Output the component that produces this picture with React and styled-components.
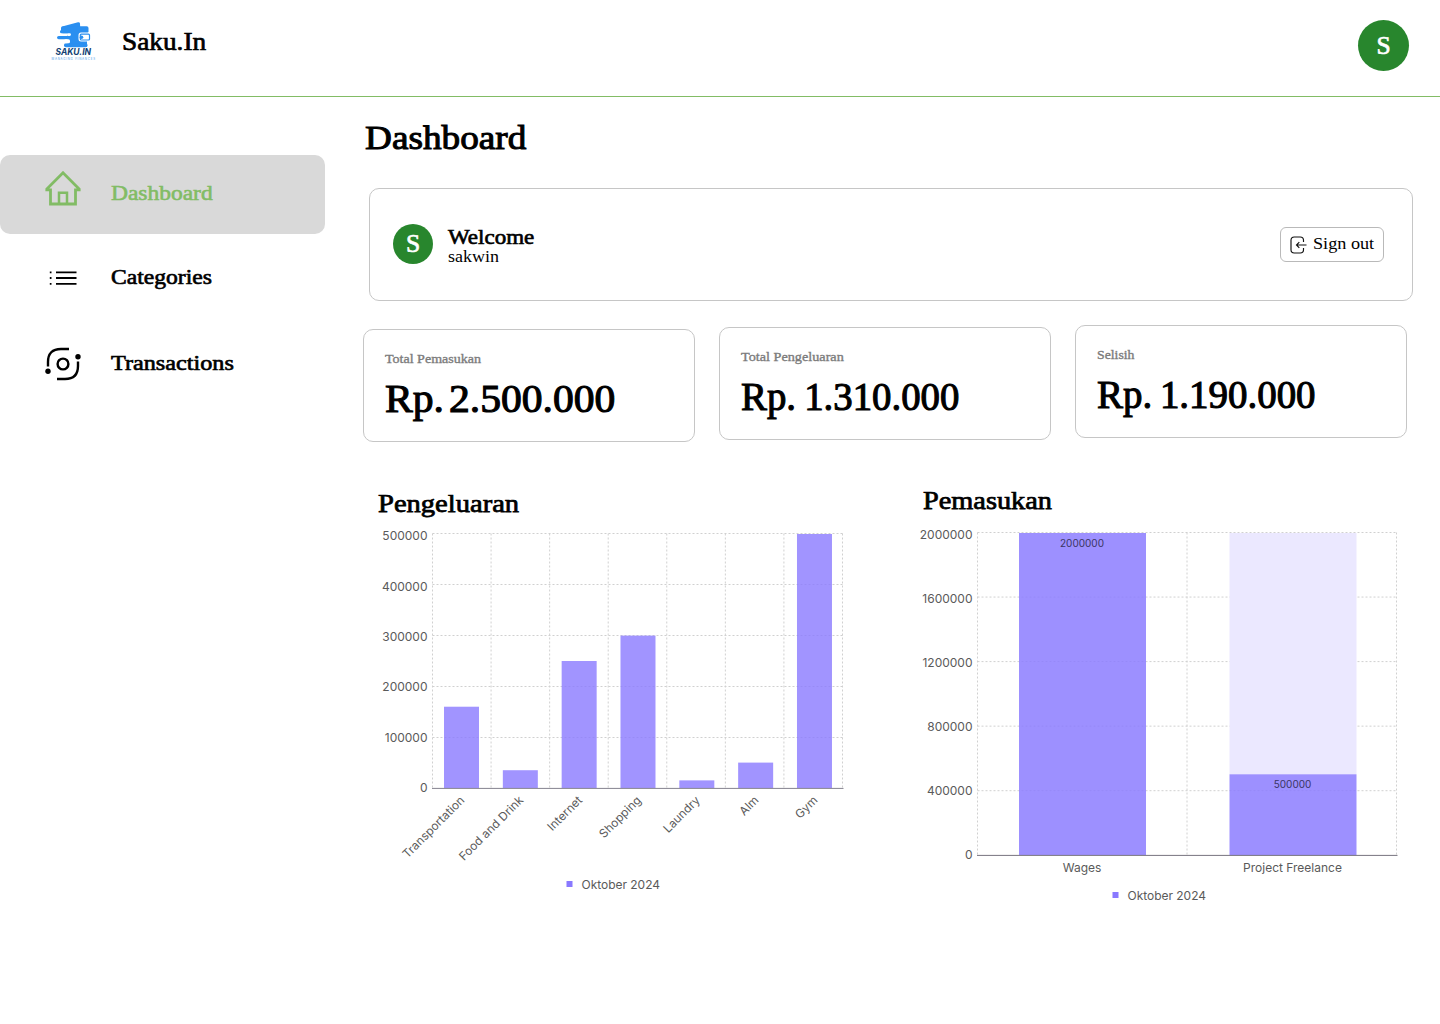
import React from "react";
import styled, { createGlobalStyle } from "styled-components";

const GlobalStyle = createGlobalStyle`
  * { box-sizing: border-box; }
  body { margin: 0; background: #fff; color: #000; font-family: "Liberation Serif", serif; }
  h1, h2, p { margin: 0; font-weight: 400; }
`;

const Page = styled.div`
  min-height: 1024px;
  display: flex;
  flex-direction: column;
`;

const Label = styled.span`
  display: inline-block;
  white-space: nowrap;
  font-size: ${(p) => p.$size}px;
  line-height: ${(p) => p.$line || p.$size}px;
  color: ${(p) => p.$color || "#000"};
  word-spacing: ${(p) => p.$gap || 0}px;
  -webkit-text-stroke: ${(p) => p.$weight || 0}px currentColor;
  transform: scaleX(${(p) => p.$stretch || 1});
  transform-origin: left center;
`;

const Header = styled.header`
  height: 97px;
  border-bottom: 1px solid #82bc65;
  display: flex;
  align-items: flex-start;
  justify-content: space-between;
  padding: 20px 31px 0 50px;
`;

const Brand = styled.div`
  display: flex;
  align-items: center;
  gap: 25px;
  height: 42px;
`;

const BrandName = styled(Label)`
  padding-top: 2px;
`;

const Avatar = styled.div`
  width: ${(p) => p.$size}px;
  height: ${(p) => p.$size}px;
  border-radius: 50%;
  background: #28862d;
  display: flex;
  align-items: center;
  justify-content: center;
  flex: none;
`;

const Initial = styled(Label)`
  transform-origin: center;
`;

const Body = styled.div`
  display: flex;
  flex: 1;
`;

const Sidebar = styled.nav`
  width: 325px;
  flex: none;
  padding-top: 58px;
`;

const NavItem = styled.div`
  display: flex;
  align-items: center;
  gap: 30px;
  height: ${(p) => (p.$active ? 79 : 86)}px;
  padding: 0 0 ${(p) => (p.$active ? 3 : 0)}px 45px;
  border-radius: 10px;
  background: ${(p) => (p.$active ? "#d9d9d9" : "transparent")};
`;

const NavLabel = styled(Label)`
  padding-top: 2px;
`;

const NavIcon = styled.svg`
  width: 36px;
  height: 36px;
  flex: none;
  margin-top: ${(p) => p.$shift || 0}px;
`;

const Main = styled.main`
  flex: 1;
  padding: 20px 27px 0 38px;
`;

const Title = styled.h1`
  height: 42px;
  padding-left: 2px;
  display: flex;
  align-items: center;
`;

const Panel = styled.section`
  border: 1px solid #c6c6c6;
  border-radius: 10px;
  background: #fff;
`;

const Welcome = styled(Panel)`
  margin: 29px 0 0 6px;
  height: 113px;
  display: flex;
  align-items: center;
  padding: 0 28px 1px 23px;
`;

const Greeting = styled.div`
  display: flex;
  flex-direction: column;
  flex: 1;
  padding: 3px 0 0 15px;
`;

const SignOut = styled.button`
  width: 104px;
  height: 35px;
  border: 1px solid #b9b9b9;
  border-radius: 6px;
  background: #fff;
  padding: 0 0 0 9px;
  margin-top: 1px;
  display: flex;
  align-items: center;
  gap: 6px;
  font-family: inherit;
`;

const SignOutLabel = styled(Label)`
  padding-bottom: 3px;
`;

const Stats = styled.div`
  display: flex;
  align-items: flex-start;
  gap: 24px;
  margin-top: 24px;
`;

const Stat = styled(Panel)`
  width: 332px;
  height: 113px;
  margin-top: ${(p) => p.$drop}px;
  padding: 21px;
  display: flex;
  flex-direction: column;
`;

const Charts = styled.div`
  display: flex;
  margin-top: 44px;
`;

const ChartCard = styled.section`
  width: ${(p) => p.$width}px;
`;

const ChartTitle = styled.h2`
  height: 36px;
  padding: 0 0 ${(p) => p.$lift || 0}px ${(p) => p.$inset}px;
  display: flex;
  align-items: center;
`;

const Plot = styled.svg`
  display: block;
  font-family: Inter, sans-serif;
  font-size: 12px;
  fill: #5a5a5a;
`;

function Logo() {
  return (
    <svg width="47" height="42" viewBox="50 20 47 42">
      <g fill="#2b8ff0">
        <path d="M61.300 28.800Q61.300 26.600 64 25.900L78 22.200Q79.800 21.900 80 23.500L80.200 27.500Z" />
        <rect x="61" y="26.300" width="27.500" height="7" rx="1.800" />
        <rect x="67.500" y="27" width="19.500" height="20" rx="1.500" />
        <rect x="60" y="30" width="12" height="3.300" rx="1.600" />
        <rect x="57" y="35.900" width="16" height="3.400" rx="1.700" />
        <rect x="64" y="43.200" width="23.500" height="4" rx="1.800" />
      </g>
      <rect x="67" y="33.300" width="4" height="2.600" rx="1.300" fill="#fff" />
      <rect x="64" y="39.300" width="6" height="3.900" rx="1.500" fill="#fff" />
      <rect x="78.500" y="32.600" width="12" height="9" rx="2.500" fill="#fff" />
      <rect x="80.300" y="34.200" width="9.200" height="5.800" rx="1" fill="#fff" stroke="#2b8ff0" strokeWidth="1.200" />
      <circle cx="81.500" cy="37.200" r="1.800" fill="#2b8ff0" />
      <text x="55.500" y="55" fontFamily="Inter, sans-serif" fontSize="8.600" fontWeight="700" fontStyle="italic" fill="#123f73" textLength="35.500" lengthAdjust="spacingAndGlyphs">SAKU.IN</text>
      <text x="51.500" y="59.600" fontFamily="Inter, sans-serif" fontSize="2.900" fill="#4c9cea" textLength="43.500">MANAGING FINANCES</text>
    </svg>
  );
}

const HomeIcon = () => (
  <NavIcon viewBox="0 0 36 36" $shift={-9} fill="none" stroke="#82bc65" strokeWidth="2.800" strokeLinejoin="round" strokeLinecap="round">
    <path d="M5.500 18.800H1.800V18L18 1.800 34.200 18V18.800H30.500V33H5.500Z" strokeLinejoin="miter" />
    <path d="M14 32.500V21.700H22V32.500" strokeWidth="2.500" strokeLinejoin="miter" />
  </NavIcon>
);

const ListIcon = () => (
  <NavIcon viewBox="0 0 36 36" $shift={4} fill="none" stroke="#000" strokeWidth="1.800">
    <path d="M11 11.400H31.500M11 17H31.500M11 22.800H31.500" />
    <path d="M4.800 11.400H6.500M4.800 17H6.500M4.800 22.800H6.500" />
  </NavIcon>
);

const TransactionsIcon = () => (
  <NavIcon viewBox="0 0 36 36" $shift={1} fill="none" stroke="#000" strokeWidth="2.400">
    <circle cx="18" cy="18" r="5.400" />
    <path d="M24 3H16Q3 3 3 16V20.500M12 33H20Q33 33 33 20V15.500" />
    <circle cx="33" cy="10.700" r="2.700" fill="#000" stroke="none" />
    <circle cx="3" cy="25.300" r="2.700" fill="#000" stroke="none" />
  </NavIcon>
);

const SignOutIcon = () => (
  <svg width="17" height="18" viewBox="0 0 17 18" fill="none" stroke="#111" strokeWidth="1.150">
    <path d="M13.500 6V4.200Q13.500 1 10.300 1H4.200Q1 1 1 4.200V13.800Q1 17 4.200 17H10.300Q13.500 17 13.500 13.800V12" />
    <path d="M16.500 9H6.500M9.300 6.200 6.500 9 9.300 11.800" />
  </svg>
);

const grid = { stroke: "#d0d0d0", strokeWidth: 1, strokeDasharray: "2 2" };

const expenses = [
  ["Transportation", 160000],
  ["Food and Drink", 35000],
  ["Internet", 250000],
  ["Shopping", 300000],
  ["Laundry", 15000],
  ["Alm", 50000],
  ["Gym", 500000],
];

function ExpenseChart() {
  return (
    <Plot width="490" height="372" viewBox="363 522 490 372">
      {[0, 1, 2, 3, 4].map((i) => (
        <line key={i} x1="432.500" x2="843" y1={533.5 + i * 51} y2={533.5 + i * 51} {...grid} />
      ))}
      {[0, 1, 2, 3, 4, 5, 6, 7].map((i) => (
        <line key={i} x1={432.5 + i * 58.57} x2={432.5 + i * 58.57} y1="533.500" y2="788" {...grid} />
      ))}
      {[500000, 400000, 300000, 200000, 100000, 0].map((v, i) => (
        <text key={v} x="427.500" y={540.2 + i * 50.35} textAnchor="end">{v}</text>
      ))}
      {expenses.map(([name, value], i) => {
        const x = 444 + i * 58.83;
        const h = (value / 500000) * 254;
        return (
          <g key={name}>
            <rect x={x} y={788 - h} width="35" height={h} fill="#8979ff" fillOpacity="0.800" />
            <text fontSize="11.850" textAnchor="end" transform={`translate(${x + 21.3} 801) rotate(-45)`}>{name}</text>
          </g>
        );
      })}
      <line x1="432" x2="843.500" y1="788.400" y2="788.400" stroke="#85828f" />
      <rect x="566.500" y="881" width="6" height="6" fill="#8979ff" />
      <text x="581.500" y="888.500" textLength="78.500">Oktober 2024</text>
    </Plot>
  );
}

function IncomeChart() {
  return (
    <Plot width="500" height="385" viewBox="910 522 500 385">
      {[0, 1, 2, 3, 4].map((i) => (
        <line key={i} x1="977.500" x2="1397" y1={532.5 + i * 64.55} y2={532.5 + i * 64.55} {...grid} />
      ))}
      {[977.5, 1187, 1396.5].map((x) => (
        <line key={x} x1={x} x2={x} y1="532.500" y2="855" {...grid} />
      ))}
      {[2000000, 1600000, 1200000, 800000, 400000, 0].map((v, i) => (
        <text key={v} x="972.500" y={539.2 + i * 64} textAnchor="end">{v}</text>
      ))}
      <rect x="1229.500" y="533" width="127" height="241.500" fill="#ebe8ff" />
      <rect x="1019" y="533" width="127" height="322" fill="#8979ff" fillOpacity="0.830" />
      <rect x="1229.500" y="774.300" width="127" height="81" fill="#8979ff" fillOpacity="0.830" />
      <line x1="977" x2="1397.500" y1="855.400" y2="855.400" stroke="#77747f" />
      <g fontSize="10" fill="#3a3564" textAnchor="middle">
        <text x="1082" y="546.700">2000000</text>
        <text x="1292.500" y="788.200">500000</text>
      </g>
      <text x="1082" y="872.200" textAnchor="middle">Wages</text>
      <text x="1292.500" y="872.200" textAnchor="middle">Project Freelance</text>
      <rect x="1112.500" y="892" width="6" height="6" fill="#8979ff" />
      <text x="1127.500" y="899.500" textLength="78.500">Oktober 2024</text>
    </Plot>
  );
}

const stats = [
  { label: "Total Pemasukan", value: "Rp. 2.500.000", drop: 4, ls: 1.105, vs: 1.066, gap: -5 },
  { label: "Total Pengeluaran", value: "Rp. 1.310.000", drop: 2, ls: 1.12, vs: 0.995, gap: -1.5 },
  { label: "Selisih", value: "Rp. 1.190.000", drop: 0, ls: 1.085, vs: 0.998, gap: -2 },
];

export default function App() {
  return (
    <Page>
      <GlobalStyle />
      <Header>
        <Brand>
          <Logo />
          <BrandName $size={25.5} $stretch={1.07} $weight={0.7}>Saku.In</BrandName>
        </Brand>
        <Avatar $size={51}>
          <Initial $size={25.5} $color="#fff" $weight={0.7}>S</Initial>
        </Avatar>
      </Header>
      <Body>
        <Sidebar>
          <NavItem $active>
            <HomeIcon />
            <NavLabel $size={21.2} $stretch={1.107} $weight={0.6} $color="#82bc65">Dashboard</NavLabel>
          </NavItem>
          <NavItem>
            <ListIcon />
            <NavLabel $size={21.2} $stretch={1.113} $weight={0.65}>Categories</NavLabel>
          </NavItem>
          <NavItem>
            <TransactionsIcon />
            <NavLabel $size={21.2} $stretch={1.143} $weight={0.65}>Transactions</NavLabel>
          </NavItem>
        </Sidebar>
        <Main>
          <Title>
            <Label $size={34} $stretch={1.095} $weight={1}>Dashboard</Label>
          </Title>
          <Welcome>
            <Avatar $size={40}>
              <Initial $size={25.5} $color="#fff" $weight={0.7}>S</Initial>
            </Avatar>
            <Greeting>
              <Label $size={21.2} $line={22} $stretch={1.085} $weight={0.65}>Welcome</Label>
              <Label $size={17} $line={18} $stretch={1.06}>sakwin</Label>
            </Greeting>
            <SignOut>
              <SignOutIcon />
              <SignOutLabel $size={17} $stretch={1.07}>Sign out</SignOutLabel>
            </SignOut>
          </Welcome>
          <Stats>
            {stats.map((s) => (
              <Stat key={s.label} $drop={s.drop}>
                <Label $size={12.7} $line={16} $stretch={s.ls} $weight={0.35} $color="#7c7c7c">{s.label}</Label>
                <Label $size={39} $line={64} $stretch={s.vs} $weight={1.1} $gap={s.gap}>{s.value}</Label>
              </Stat>
            ))}
          </Stats>
          <Charts>
            <ChartCard $width={547}>
              <ChartTitle $inset={15}>
                <Label $size={25.5} $stretch={1.12} $weight={0.75}>Pengeluaran</Label>
              </ChartTitle>
              <ExpenseChart />
            </ChartCard>
            <ChartCard $width={500}>
              <ChartTitle $inset={13} $lift={6}>
                <Label $size={25.5} $stretch={1.11} $weight={0.75}>Pemasukan</Label>
              </ChartTitle>
              <IncomeChart />
            </ChartCard>
          </Charts>
        </Main>
      </Body>
    </Page>
  );
}
